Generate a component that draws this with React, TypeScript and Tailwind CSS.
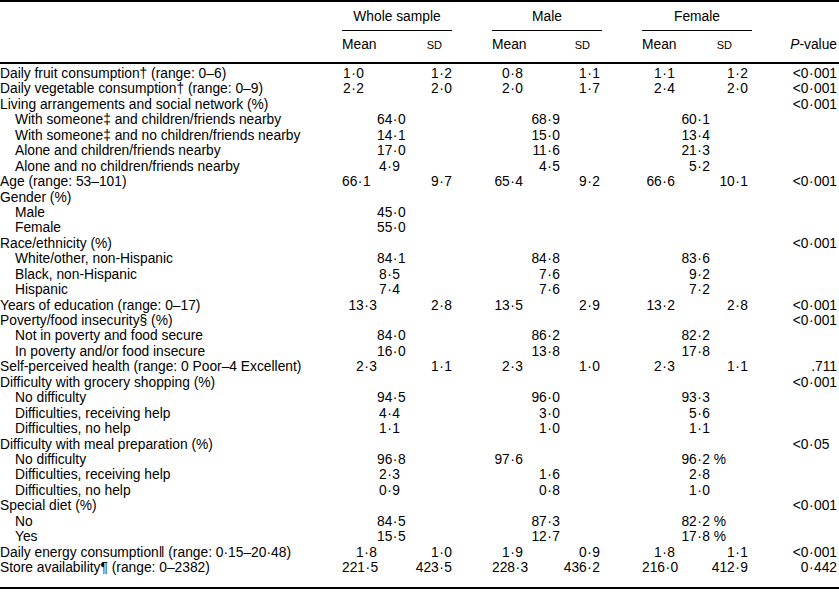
type Cell = { mean?: string; sd?: string; sub?: string; suffix?: string; early?: boolean }

interface Row {
  label: string
  indent?: boolean
  w?: Cell
  m?: Cell
  f?: Cell
  p?: string
  pShort?: boolean
}

const rows: Row[] = [
  { label: 'Daily fruit consumption† (range: 0–6)', w: { mean: '1·0', sd: '1·2', early: true }, m: { mean: '0·8', sd: '1·1' }, f: { mean: '1·1', sd: '1·2' }, p: '<0·001' },
  { label: 'Daily vegetable consumption† (range: 0–9)', w: { mean: '2·2', sd: '2·0', early: true }, m: { mean: '2·0', sd: '1·7' }, f: { mean: '2·4', sd: '2·0' }, p: '<0·001' },
  { label: 'Living arrangements and social network (%)', p: '<0·001' },
  { label: 'With someone‡ and children/friends nearby', indent: true, w: { sub: '64·0' }, m: { sub: '68·9' }, f: { sub: '60·1' } },
  { label: 'With someone‡ and no children/friends nearby', indent: true, w: { sub: '14·1' }, m: { sub: '15·0' }, f: { sub: '13·4' } },
  { label: 'Alone and children/friends nearby', indent: true, w: { sub: '17·0' }, m: { sub: '11·6' }, f: { sub: '21·3' } },
  { label: 'Alone and no children/friends nearby', indent: true, w: { sub: '4·9' }, m: { sub: '4·5' }, f: { sub: '5·2' } },
  { label: 'Age (range: 53–101)', w: { mean: '66·1', sd: '9·7', early: true }, m: { mean: '65·4', sd: '9·2' }, f: { mean: '66·6', sd: '10·1' }, p: '<0·001' },
  { label: 'Gender (%)' },
  { label: 'Male', indent: true, w: { sub: '45·0' } },
  { label: 'Female', indent: true, w: { sub: '55·0' } },
  { label: 'Race/ethnicity (%)', p: '<0·001' },
  { label: 'White/other, non-Hispanic', indent: true, w: { sub: '84·1' }, m: { sub: '84·8' }, f: { sub: '83·6' } },
  { label: 'Black, non-Hispanic', indent: true, w: { sub: '8·5' }, m: { sub: '7·6' }, f: { sub: '9·2' } },
  { label: 'Hispanic', indent: true, w: { sub: '7·4' }, m: { sub: '7·6' }, f: { sub: '7·2' } },
  { label: 'Years of education (range: 0–17)', w: { mean: '13·3', sd: '2·8' }, m: { mean: '13·5', sd: '2·9' }, f: { mean: '13·2', sd: '2·8' }, p: '<0·001' },
  { label: 'Poverty/food insecurity§ (%)', p: '<0·001' },
  { label: 'Not in poverty and food secure', indent: true, w: { sub: '84·0' }, m: { sub: '86·2' }, f: { sub: '82·2' } },
  { label: 'In poverty and/or food insecure', indent: true, w: { sub: '16·0' }, m: { sub: '13·8' }, f: { sub: '17·8' } },
  { label: 'Self-perceived health (range: 0 Poor–4 Excellent)', w: { mean: '2·3', sd: '1·1' }, m: { mean: '2·3', sd: '1·0' }, f: { mean: '2·3', sd: '1·1' }, p: '.711' },
  { label: 'Difficulty with grocery shopping (%)', p: '<0·001' },
  { label: 'No difficulty', indent: true, w: { sub: '94·5' }, m: { sub: '96·0' }, f: { sub: '93·3' } },
  { label: 'Difficulties, receiving help', indent: true, w: { sub: '4·4' }, m: { sub: '3·0' }, f: { sub: '5·6' } },
  { label: 'Difficulties, no help', indent: true, w: { sub: '1·1' }, m: { sub: '1·0' }, f: { sub: '1·1' } },
  { label: 'Difficulty with meal preparation (%)', p: '<0·05', pShort: true },
  { label: 'No difficulty', indent: true, w: { sub: '96·8' }, m: { mean: '97·6' }, f: { sub: '96·2', suffix: '%' } },
  { label: 'Difficulties, receiving help', indent: true, w: { sub: '2·3' }, m: { sub: '1·6' }, f: { sub: '2·8' } },
  { label: 'Difficulties, no help', indent: true, w: { sub: '0·9' }, m: { sub: '0·8' }, f: { sub: '1·0' } },
  { label: 'Special diet (%)', p: '<0·001' },
  { label: 'No', indent: true, w: { sub: '84·5' }, m: { sub: '87·3' }, f: { sub: '82·2', suffix: '%' } },
  { label: 'Yes', indent: true, w: { sub: '15·5' }, m: { sub: '12·7' }, f: { sub: '17·8', suffix: '%' } },
  { label: 'Daily energy consumption‖ (range: 0·15–20·48)', w: { mean: '1·8', sd: '1·0' }, m: { mean: '1·9', sd: '0·9' }, f: { mean: '1·8', sd: '1·1' }, p: '<0·001' },
  { label: 'Store availability¶ (range: 0–2382)', w: { mean: '221·5', sd: '423·5' }, m: { mean: '228·3', sd: '436·2' }, f: { mean: '216·0', sd: '412·9' }, p: '0·442' },
]

/* column slots per group: mean | sub | sd, each right-aligned */
const slots = {
  w: { box: 'w-[150px]', mean: 'w-[35px]', sub: 'w-[23px]', sd: 'w-[52px]' },
  m: { box: 'w-[150px]', mean: 'w-[31px]', sub: 'w-[37px]', sd: 'w-[40px]' },
  f: { box: 'w-[145px]', mean: 'w-[33px]', sub: 'w-[35px]', sd: 'w-[38px]' },
}

// numbers in the table set the decimal point a little wider than the text face does
function Num({ v }: { v?: string }) {
  if (!v) return null
  const [a, b] = v.split('·')
  if (b === undefined) return <>{v}</>
  return (
    <>
      {a}
      <span className="inline-block w-[0.4em] text-center">·</span>
      {b}
    </>
  )
}

function Group({ cell, kind }: { cell?: Cell; kind: 'w' | 'm' | 'f' }) {
  const s = slots[kind]
  return (
    <div className={`flex shrink-0 ${s.box}`}>
      <div className={`shrink-0 text-right whitespace-nowrap ${s.mean} ${cell?.early ? 'pr-[13px]' : ''}`}>
        <Num v={cell?.mean} />
      </div>
      <div className={`shrink-0 text-right whitespace-nowrap ${s.sub}`}>
        <Num v={cell?.sub} />
        {cell?.suffix && <span className="inline-block w-0 whitespace-nowrap">&nbsp;{cell.suffix}</span>}
      </div>
      <div className={`shrink-0 text-right whitespace-nowrap ${s.sd}`}>
        <Num v={cell?.sd} />
      </div>
    </div>
  )
}

export default function App() {
  return (
    <div className="w-[839px] bg-white text-black" style={{ fontFamily: '"Liberation Sans", Arial, sans-serif' }}>
      <div className="w-[839px] text-[13.8px]">
        {/* header */}
        <div className="border-t-2 border-black">
          <div className="flex h-[29px] items-end">
            <div className="w-[342px] shrink-0" />
            <div className="w-[150px] shrink-0">
              <div className="w-[110px] border-b border-black pb-[5px] text-center leading-[16px]">Whole sample</div>
            </div>
            <div className="w-[150px] shrink-0">
              <div className="w-[110px] border-b border-black pb-[5px] text-center leading-[16px]">Male</div>
            </div>
            <div className="w-[145px] shrink-0">
              <div className="w-[110px] border-b border-black pb-[5px] text-center leading-[16px]">Female</div>
            </div>
          </div>
          <div className="flex h-[33px] items-center border-b-2 border-black pb-[3px]">
            <div className="w-[342px] shrink-0" />
            <div className="flex w-[150px] shrink-0 items-center">
              <div className="flex w-[110px] items-center justify-between pr-[10px]">
                <span>Mean</span>
                <span className="text-[11px]">SD</span>
              </div>
            </div>
            <div className="flex w-[150px] shrink-0 items-center">
              <div className="flex w-[110px] items-center justify-between pr-[12px]">
                <span>Mean</span>
                <span className="text-[11px]">SD</span>
              </div>
            </div>
            <div className="flex w-[145px] shrink-0 items-center">
              <div className="flex w-[110px] items-center justify-between pr-[20px]">
                <span>Mean</span>
                <span className="text-[11px]">SD</span>
              </div>
            </div>
            <div className="w-[50px] shrink-0 text-right">
              <i>P</i>-value
            </div>
          </div>
        </div>

        {/* body */}
        <div className="border-b-2 border-black pt-[2px] pb-[12px]">
          {rows.map((r, i) => (
            <div key={i} className="flex h-[15.45px] items-center leading-[15.45px]">
              <div className={`w-[342px] shrink-0 whitespace-nowrap ${r.indent ? 'pl-[15px]' : ''}`}>{r.label}</div>
              <Group cell={r.w} kind="w" />
              <Group cell={r.m} kind="m" />
              <Group cell={r.f} kind="f" />
              <div className="w-[50px] shrink-0 text-right whitespace-nowrap">
                <Num v={r.p} />
                {r.pShort && <span className="inline-block w-[7.7px]" />}
              </div>
            </div>
          ))}
        </div>
      </div>
    </div>
  )
}
